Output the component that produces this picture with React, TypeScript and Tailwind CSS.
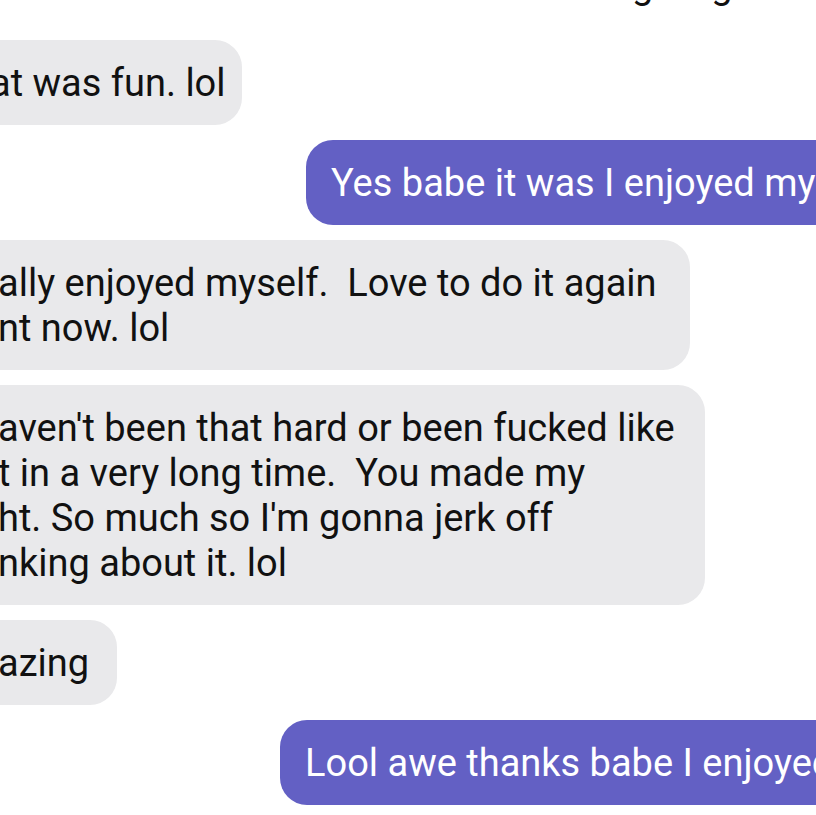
import React from 'react';

type Msg = {
  from: 'them' | 'me';
  lines: string[];
  edge: number;
  shift?: number;
};

const messages: Msg[] = [
  { from: 'them', lines: ['at was fun. lol'], edge: 242, shift: 8 },
  { from: 'me', lines: ['Yes babe it was I enjoyed myself too'], edge: 306 },
  { from: 'them', lines: ['ally enjoyed myself.  Love to do it again', 'nt now. lol'], edge: 690 },
  {
    from: 'them',
    lines: [
      "aven't been that hard or been fucked like",
      't in a very long time.  You made my',
      "ht. So much so I'm gonna jerk off",
      'nking about it. lol',
    ],
    edge: 705,
  },
  { from: 'them', lines: ['azing'], edge: 117 },
  { from: 'me', lines: ['Lool awe thanks babe I enjoyed it too'], edge: 280 },
];

function Bubble({ msg }: { msg: Msg }) {
  if (msg.from === 'me') {
    return (
      <div className="flex" style={{ paddingLeft: msg.edge }}>
        <div className="shrink-0 whitespace-nowrap rounded-[27px] bg-[#6360c4] pl-[25px] pr-[60px] pt-[21px] pb-[19px] text-white">
          {msg.lines[0]}
        </div>
      </div>
    );
  }
  return (
    <div className="flex">
      <div
        className="shrink-0 whitespace-pre rounded-[27px] bg-[#e9e9eb] pr-[25px] pt-[21px] pb-[19px] -ml-[32px] text-[#111]"
        style={{ width: msg.edge + 32, paddingLeft: 30 - (msg.shift ?? 0) }}
      >
        {msg.lines.map((l, i) => (
          <div key={i}>{l}</div>
        ))}
      </div>
    </div>
  );
}

export default function App() {
  return (
    <div
      className="w-[816px] h-[815px] overflow-hidden bg-white text-[38px] leading-[45px]"
      style={{ fontFamily: 'Roboto, "Noto Sans", sans-serif' }}
    >
      {/* tail of the line above, cut off by the crop */}
      <div className="relative h-[40px]">
        <div className="absolute -top-[37px] left-[632px] flex gap-[58px] text-[#111]">
          <span>g</span>
          <span>g</span>
        </div>
      </div>
      <div className="flex flex-col gap-[15px]">
        {messages.map((m, i) => (
          <Bubble key={i} msg={m} />
        ))}
      </div>
    </div>
  );
}
